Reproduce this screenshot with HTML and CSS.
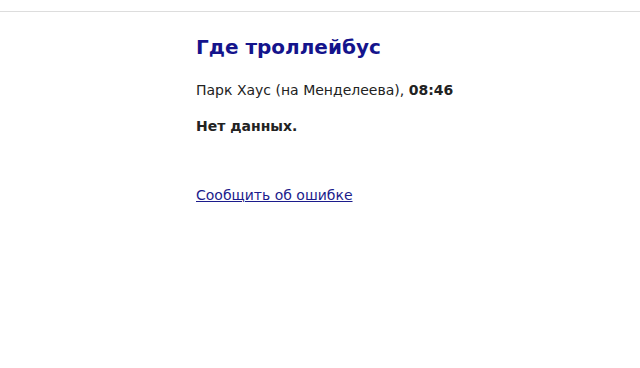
FILE: index.html
```html
<!DOCTYPE html>
<html lang="ru">
<head>
  <meta charset="UTF-8">
  <title>Где троллейбус</title>
  <link rel="stylesheet" href="styles.css">
</head>
<body>
  <div class="topbar"></div>

  <div class="content">
    <h1>Где троллейбус</h1>
    <p class="stop">Парк Хаус (на Менделеева), <b>08:46</b></p>
    <p class="nodata"><b>Нет данных.</b></p>

    <p class="report"><a href="#">Сообщить об ошибке</a></p>
  </div>
</body>
</html>
```

FILE: styles.css
```css
body {
  margin: 0;
  font-family: "DejaVu Sans", Verdana, sans-serif;
  font-size: 14px;
  color: #222;
  background-color: #fff;
}

.topbar {
  height: 11px;
  border-bottom: 1px solid #ddd;
}

.content {
  width: 280px;
  margin-left: 196px;
  padding-top: 23px;
}

h1 {
  margin: 0;
  font-size: 20px;
  color: #14148c;
}

.stop {
  margin: 23px 0 0 0;
}

.nodata {
  margin: 20px 0 0 0;
}

.report {
  margin: 53px 0 0 0;
}

.report a {
  color: #1c1c8c;
}
```
